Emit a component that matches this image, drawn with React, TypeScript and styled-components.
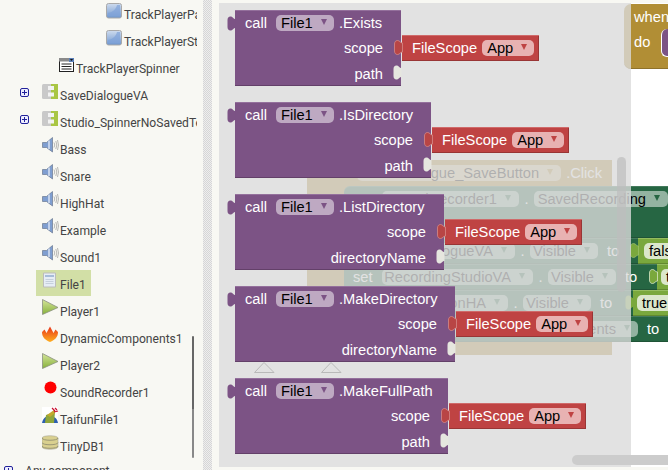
import React from "react";
import styled, { createGlobalStyle } from "styled-components";

const Global = createGlobalStyle`
  html, body { margin: 0; padding: 0; background: #f8f8f3; }
  body { width: 668px; height: 470px; overflow: hidden; }
`;

const Page = styled.div`
  width: 668px; height: 470px; display: flex; overflow: hidden; background: #f8f8f3;
`;

/* ---------- component tree ---------- */
const TreePane = styled.div`
  position: relative; width: 203px; flex: none; height: 470px; overflow: hidden;
`;
const TreeClip = styled.div`
  width: 197px; overflow: hidden;
`;
const TreeRow = styled.div<{ $indent: number }>`
  height: 27px; display: flex; align-items: flex-start; padding-left: ${p => p.$indent}px;
  font: 12.1px Roboto, "Liberation Sans", sans-serif; color: #444; white-space: nowrap;
`;
const Expander = styled.svg<{ $gap: number }>`
  width: 9px; height: 9px; flex: none; margin-top: 7px; margin-right: ${p => p.$gap}px;
`;
const TreeItem = styled.div<{ $selected?: boolean }>`
  display: flex; align-items: flex-start; gap: 1px; height: 26px;
  ${p => p.$selected ? "background: #d2dfa6; margin-left: -6px; padding: 0 5px 0 6px;" : ""}
`;
const TreeIcon = styled.svg`
  width: 17px; height: 17px; flex: none; margin-top: 2px;
`;
const TreeLabel = styled.span<{ $top?: number }>`
  line-height: 14px; margin-top: ${p => p.$top ?? 8}px;
`;
const TreeThumb = styled.div`
  position: absolute; left: 192px; top: 336px; width: 2px; height: 122px;
  background: linear-gradient(#666 0 60%, #888 60%); border-radius: 1px;
`;
const Splitter = styled.div`
  width: 9px; flex: none; height: 470px;
  background: repeating-conic-gradient(#d6d6d6 0 25%, #eeeeee 0 50%) 0 0 / 2px 2px;
`;
const Gutter = styled.div`
  width: 7px; flex: none;
`;

/* ---------- block canvas ---------- */
const Canvas = styled.div`
  position: relative; width: 449px; height: 464px; margin-top: 3px; background: #fff; overflow: hidden;
  font: 14.67px "Liberation Sans", Arial, sans-serif; color: #fff;
`;
const Flyout = styled.div`
  position: absolute; left: 0; top: 0; width: 412px; height: 100%;
  background: rgba(219, 219, 219, 0.8);
`;
const VScroll = styled.div`
  position: absolute; left: 398px; top: 154px; width: 9px; height: 135px;
  border-radius: 5px; background: rgba(190, 190, 190, 0.7);
`;
const HScroll = styled.div`
  position: absolute; left: 353px; top: 452px; width: 110px; height: 10px;
  border-radius: 5px; background: #cccccc;
`;

const HatBlock = styled.div`
  position: absolute; left: 405px; top: 1px; width: 60px; height: 65px; box-sizing: border-box;
  background: #b18e35; border-radius: 7px 0 0 7px; padding-left: 10px;
  display: grid; grid-template-rows: 25px 26px;
  box-shadow: inset 0 -1px 0 #8e722a;
`;
const HatRow = styled.div`
  display: flex; align-items: center; gap: 11px; height: 25px;
`;
const HatSlot = styled.div`
  width: 20px; height: 27px; margin-top: 2px; background: #7c5385; border-radius: 6px 0 0 6px;
  border-left: 1px solid #fff; border-bottom: 1px solid #fff; flex: none;
`;

const EventBlock = styled.div`
  position: absolute; left: 88px; top: 157px; width: 305px; height: 195px;
  background: #b18e35; border-radius: 6px 0 0 6px;
`;
const EventHeader = styled.div`
  height: 26px; display: flex; align-items: center; justify-content: space-between; padding: 0 10px 0 10px;
`;
const EventBody = styled.div`
  margin-left: 37px; display: flex; flex-direction: column;
`;
const RowWrap = styled.div<{ $tall?: boolean }>`
  display: flex; height: ${p => p.$tall ? 52 : 26}px; width: 340px;
`;
const SetRow = styled.div<{ $w: number; $tall?: boolean }>`
  width: ${p => p.$w}px; flex: none; box-sizing: border-box; height: ${p => p.$tall ? 52 : 26}px;
  background: #266643; padding-left: 9px; display: flex; align-items: ${p => p.$tall ? "flex-start" : "center"};
  ${p => p.$tall ? "padding-top: 5px; border-radius: 6px 0 0 0;" : ""}
  box-shadow: inset 0 1px 0 rgba(255,255,255,.14), inset 0 -1px 0 rgba(0,0,0,.18);
`;
const SetWord = styled.span`
  width: 29px; flex: none; line-height: 16px;
`;
const Dot = styled.span`
  width: 15px; flex: none; text-align: center; line-height: 16px;
`;
const ToWord = styled.span`
  margin-left: 9px; line-height: 16px;
`;
const Field = styled.div<{ $w?: number; $bg?: string; $compact?: boolean }>`
  ${p => p.$w ? `width: ${p.$w}px;` : ""} height: 16px; flex: none; box-sizing: border-box;
  display: flex; align-items: center; justify-content: ${p => p.$compact ? "space-between" : "flex-end"};
  gap: 8px; padding: ${p => p.$compact ? "0 9px 0 5px" : "0 8px 0 5px"};
  border-radius: 5px; background: ${p => p.$bg || "rgba(255,255,255,.5)"}; color: #000; white-space: nowrap; line-height: 16px;
`;
const Arrow = styled.span<{ $c: string }>`
  width: 0; height: 0; flex: none; margin-top: -2px;
  border-left: 3px solid transparent; border-right: 3px solid transparent; border-top: 6px solid ${p => p.$c};
`;
const ValueBlock = styled.div`
  position: relative; flex: 1; height: 26px; background: #7aa83d; padding: 5px 0 0 4px; box-sizing: border-box;
  box-shadow: inset 0 1px 0 #95bd5f, inset 0 -1px 0 #62892f;
`;
const ValueField = styled.div<{ $inset?: number }>`
  width: 60px; height: 16px; background: #dbe7cb; border-radius: 5px; color: #000; padding-left: 5px; line-height: 16px;
  margin-left: ${p => p.$inset ?? 0}px;
`;
const Tab = styled.svg<{ $l: number; $t: number }>`
  position: absolute; left: ${p => p.$l}px; top: ${p => p.$t}px; width: 8px; height: 16px; overflow: visible;
`;

/* ---------- flyout blocks ---------- */
const CallStack = styled.div`
  position: absolute; left: 16px; top: 7px; display: flex; flex-direction: column; gap: 16px;
`;
const CallBlock = styled.div<{ $w: number }>`
  position: relative; width: ${p => p.$w}px; height: 76px; box-sizing: border-box; background: #7c5385;
  display: grid; grid-template-rows: 25px 26px 25px;
  box-shadow: inset 0 1px 0 #94709c, inset 0 -1px 0 #634069;
`;
const TopRow = styled.div`
  display: flex; align-items: center; padding-left: 10px; gap: 9px; white-space: nowrap;
`;
const Method = styled.span`
  margin-left: -4px;
`;
const ArgRow = styled.div`
  position: relative; display: flex; align-items: center; justify-content: flex-end; padding-right: 18px;
`;
const Literal = styled.div`
  position: absolute; left: calc(100% + 1px); top: 0; width: 137px; height: 26px; box-sizing: border-box;
  display: flex; align-items: center; gap: 5px; padding-left: 10px; background: #bf4343; color: #fff;
  box-shadow: inset 0 1px 0 #cf6a6a, inset 0 -1px 0 #993535, inset -1px 0 0 #993535;
`;
const Triangles = styled.svg`
  position: absolute; left: 19px; top: 352px; width: 92px; height: 11px;
`;

const tabPath = "M8.500 3 C6 3 6 .5 3.500 .5 C1.500 .5 .5 2 .5 4 V11 C.5 13 1.500 14.500 3.500 14.500 C6 14.500 6 12 8.500 12 Z";

const Plus = ({ gap }: { gap: number }) => (
  <Expander $gap={gap} viewBox="0 0 9 9">
    <rect x=".5" y=".5" width="8" height="8" rx="1.5" fill="#eef" stroke="#22229a" />
    <path d="M2 4.5h5M4.5 2v5" stroke="#22229a" />
  </Expander>
);

const ButtonIcon = () => (
  <TreeIcon viewBox="0 0 17 17">
    <defs><linearGradient id="btn" x1="0" y1="0" x2="0" y2="1"><stop offset="0" stopColor="#cfdcee" /><stop offset="1" stopColor="#6f97cf" /></linearGradient></defs>
    <rect x=".5" y="1.5" width="15" height="14.5" rx="2" fill="url(#btn)" stroke="#a9a9a9" />
    <path d="M2 11 C7 10 10 7 11 3 H14 V14 H2 Z" fill="#7fa3d8" opacity=".7" />
  </TreeIcon>
);
const SpinnerIcon = () => (
  <TreeIcon viewBox="0 0 17 17">
    <rect x="1.5" y="2.5" width="14" height="13" fill="#fff" stroke="#222" />
    <rect x="1" y="2" width="15" height="3.5" fill="#8a8a8a" />
    <rect x="11" y="2" width="5" height="4" fill="#5a7fb8" />
    <path d="M12 3l1.5 2 1.5-2z" fill="#111" />
    <path d="M3.5 8h10M3.5 10.500h10M3.500 13h10" stroke="#222" />
  </TreeIcon>
);
const ArrangementIcon = () => (
  <TreeIcon viewBox="0 0 17 17">
    <rect x="0" y="1" width="16" height="15" rx="1.500" fill="#c9c9c9" />
    <rect x="9" y="1" width="7" height="15" fill="#a9c644" />
    <rect x="6" y="3" width="6" height="4" fill="#f2f2f2" />
    <rect x="6" y="9.500" width="6" height="4" fill="#f2f2f2" />
  </TreeIcon>
);
const SpeakerIcon = () => (
  <TreeIcon viewBox="0 0 17 17">
    <path d="M.5 5.500 H4.500 L10.500 .5 V15 L4.500 10.500 H.5 Z" fill="#7f9ed0" stroke="#6a7890" strokeWidth=".7" />
    <path d="M7 3.500 V12" stroke="#d8e2f3" strokeWidth="1.500" />
    <path d="M12 5.500 Q13.500 8 12 10.500M13.800 4 Q15.800 8 13.800 12M15.500 3 Q17.500 8 15.500 13" fill="none" stroke="#8c8c8c" strokeWidth=".6" />
  </TreeIcon>
);
const FileIcon = () => (
  <TreeIcon viewBox="0 0 17 17">
    <path d="M1.500 1 H13.500 V15 H1.500 Z" fill="#e6edf5" stroke="#bcbcbc" />
    <path d="M3 3H12V5H3z" fill="#a7bcd8" />
    <path d="M3.500 7.500h8M3.500 9.500h8M3.500 11.500h8" stroke="#c6d0dc" />
  </TreeIcon>
);
const PlayerIcon = ({ id }: { id: string }) => (
  <TreeIcon viewBox="0 0 17 17">
    <defs><linearGradient id={id} x1="0" y1="0" x2="0" y2="1"><stop offset="0" stopColor="#d5e59a" /><stop offset="1" stopColor="#86b13a" /></linearGradient></defs>
    <path d="M.5 .5 L16 8.500 L.5 15.500 Z" fill={`url(#${id})`} stroke="#8a8f80" strokeWidth=".8" />
  </TreeIcon>
);
const FlameIcon = () => (
  <TreeIcon viewBox="0 0 17 17">
    <defs><linearGradient id="flame" x1="0" y1="0" x2="0" y2="1"><stop offset="0" stopColor="#e8321a" /><stop offset="1" stopColor="#ffb020" /></linearGradient></defs>
    <path d="M8 16 C3 14 0 11 0 6 L2.500 3.500 L4.500 7 L8 .5 L11.500 7 L13.500 3.500 L16 6 C16 11 13 14 8 16 Z" fill="url(#flame)" />
  </TreeIcon>
);
const RecordIcon = () => (
  <TreeIcon viewBox="0 0 17 17">
    <circle cx="8.500" cy="7.500" r="6" fill="#f00" />
  </TreeIcon>
);
const TaifunIcon = () => (
  <TreeIcon viewBox="0 0 17 17">
    <rect width="16" height="16" fill="#fff" />
    <path d="M0 16 C1 10 5 9 8 9 C12 9 15 11 16 16 Z" fill="#2d5fb0" />
    <path d="M3 16 L4 8 L13 5 L12 16 Z" fill="#8fa63a" />
    <path d="M5 8 L12 3 L13 6 L8 10 Z" fill="#c4a92e" />
    <path d="M10 1 L13 4 M13 1 L15 3 M12 5 L16 4" stroke="#c8102e" strokeWidth="1.200" />
  </TreeIcon>
);
const DbIcon = () => (
  <TreeIcon viewBox="0 0 17 17">
    <path d="M0 4 C0 1 16 1 16 4 V13 C16 16 0 16 0 13 Z" fill="#d9d08f" stroke="#a9a89a" strokeWidth=".6" />
    <path d="M0 4 C0 7 16 7 16 4M0 8.500 C0 11.500 16 11.500 16 8.500M0 12 C0 15 16 15 16 12" fill="none" stroke="#8d8a6f" strokeWidth=".8" />
  </TreeIcon>
);

const CallRow = ({ w, method, arg }: { w: number; method: string; arg: string }) => (
  <CallBlock $w={w}>
    <Tab $l={-8} $t={6} viewBox="0 0 8 16"><path d={tabPath} fill="#7c5385" /></Tab>
    <TopRow>
      call
      <Field $w={58} $bg="#bea9c2" $compact><span>File1</span><Arrow $c="#7c5385" /></Field>
      <Method>{method}</Method>
    </TopRow>
    <ArgRow>
      scope
      <Literal>
        <Tab $l={-8} $t={5} viewBox="0 0 8 16"><path d={tabPath} fill="#b84545" stroke="#d68a88" strokeWidth=".8" /></Tab>
        FileScope
        <Field $w={52} $bg="#e8b2b2" $compact><span>App</span><Arrow $c="#bf4343" /></Field>
      </Literal>
    </ArgRow>
    <ArgRow>
      {arg}
      <Tab $l={w - 8} $t={4} viewBox="0 0 8 16"><path d={tabPath} fill="#e6e6df" /></Tab>
    </ArgRow>
  </CallBlock>
);

export default function App() {
  return (
    <Page>
      <Global />
      <TreePane>
        <TreeClip>
          <TreeRow $indent={106}><TreeItem><ButtonIcon /><TreeLabel>TrackPlayerPause</TreeLabel></TreeItem></TreeRow>
          <TreeRow $indent={106}><TreeItem><ButtonIcon /><TreeLabel>TrackPlayerStop</TreeLabel></TreeItem></TreeRow>
          <TreeRow $indent={58}><TreeItem><SpinnerIcon /><TreeLabel>TrackPlayerSpinner</TreeLabel></TreeItem></TreeRow>
          <TreeRow $indent={20}><Plus gap={13} /><TreeItem><ArrangementIcon /><TreeLabel>SaveDialogueVA</TreeLabel></TreeItem></TreeRow>
          <TreeRow $indent={20}><Plus gap={13} /><TreeItem><ArrangementIcon /><TreeLabel>Studio_SpinnerNoSavedText</TreeLabel></TreeItem></TreeRow>
          <TreeRow $indent={42}><TreeItem><SpeakerIcon /><TreeLabel>Bass</TreeLabel></TreeItem></TreeRow>
          <TreeRow $indent={42}><TreeItem><SpeakerIcon /><TreeLabel>Snare</TreeLabel></TreeItem></TreeRow>
          <TreeRow $indent={42}><TreeItem><SpeakerIcon /><TreeLabel>HighHat</TreeLabel></TreeItem></TreeRow>
          <TreeRow $indent={42}><TreeItem><SpeakerIcon /><TreeLabel>Example</TreeLabel></TreeItem></TreeRow>
          <TreeRow $indent={42}><TreeItem><SpeakerIcon /><TreeLabel>Sound1</TreeLabel></TreeItem></TreeRow>
          <TreeRow $indent={42}><TreeItem $selected><FileIcon /><TreeLabel>File1</TreeLabel></TreeItem></TreeRow>
          <TreeRow $indent={42}><TreeItem><PlayerIcon id="pl1" /><TreeLabel>Player1</TreeLabel></TreeItem></TreeRow>
          <TreeRow $indent={42}><TreeItem><FlameIcon /><TreeLabel>DynamicComponents1</TreeLabel></TreeItem></TreeRow>
          <TreeRow $indent={42}><TreeItem><PlayerIcon id="pl2" /><TreeLabel>Player2</TreeLabel></TreeItem></TreeRow>
          <TreeRow $indent={42}><TreeItem><RecordIcon /><TreeLabel>SoundRecorder1</TreeLabel></TreeItem></TreeRow>
          <TreeRow $indent={42}><TreeItem><TaifunIcon /><TreeLabel>TaifunFile1</TreeLabel></TreeItem></TreeRow>
          <TreeRow $indent={42}><TreeItem><DbIcon /><TreeLabel>TinyDB1</TreeLabel></TreeItem></TreeRow>
          <TreeRow $indent={4}><Plus gap={12} /><TreeItem><TreeLabel $top={5}>Any component</TreeLabel></TreeItem></TreeRow>
        </TreeClip>
        <TreeThumb />
      </TreePane>
      <Splitter />
      <Gutter />
      <Canvas>
        <HatBlock>
          <HatRow>when</HatRow>
          <HatRow>do<HatSlot /></HatRow>
        </HatBlock>
        <EventBlock>
          <EventHeader>
            when
            <Field $w={204}><span>Dialogue_SaveButton</span><Arrow $c="#b18e35" /></Field>
            <span>.Click</span>
          </EventHeader>
          <EventBody>
            <RowWrap $tall>
              <SetRow $w={340} $tall>
                <SetWord>set</SetWord>
                <Field $w={137}><span>SoundRecorder1</span><Arrow $c="#266643" /></Field>
                <Dot>.</Dot>
                <Field $w={134}><span>SavedRecording</span><Arrow $c="#266643" /></Field>
              </SetRow>
            </RowWrap>
            <RowWrap>
              <SetRow $w={294}>
                <SetWord>set</SetWord>
                <Field $w={133}><span>SaveDialogueVA</span><Arrow $c="#266643" /></Field>
                <Dot>.</Dot>
                <Field $w={68}><span>Visible</span><Arrow $c="#266643" /></Field>
                <ToWord>to</ToWord>
              </SetRow>
              <ValueBlock>
                <Tab $l={-8} $t={5} viewBox="0 0 8 16"><path d={tabPath} fill="#7aa83d" stroke="#a5c878" strokeWidth=".6" /></Tab>
                <ValueField $inset={2}>false</ValueField>
              </ValueBlock>
            </RowWrap>
            <RowWrap>
              <SetRow $w={313}>
                <SetWord>set</SetWord>
                <Field $w={151}><span>RecordingStudioVA</span><Arrow $c="#266643" /></Field>
                <Dot>.</Dot>
                <Field $w={68}><span>Visible</span><Arrow $c="#266643" /></Field>
                <ToWord>to</ToWord>
              </SetRow>
              <ValueBlock>
                <Tab $l={-8} $t={5} viewBox="0 0 8 16"><path d={tabPath} fill="#7aa83d" stroke="#d8e6c6" strokeWidth=".8" /></Tab>
                <ValueField>true</ValueField>
              </ValueBlock>
            </RowWrap>
            <RowWrap>
              <SetRow $w={289}>
                <SetWord>set</SetWord>
                <Field $w={126}><span>ButtonHA</span><Arrow $c="#266643" /></Field>
                <Dot>.</Dot>
                <Field $w={68}><span>Visible</span><Arrow $c="#266643" /></Field>
                <ToWord>to</ToWord>
              </SetRow>
              <ValueBlock>
                <Tab $l={-8} $t={5} viewBox="0 0 8 16"><path d={tabPath} fill="#7aa83d" /></Tab>
                <ValueField>true</ValueField>
              </ValueBlock>
            </RowWrap>
            <RowWrap>
              <SetRow $w={340}>
                <SetWord>set</SetWord>
                <Field $w={256}><span>Components</span><Arrow $c="#266643" /></Field>
                <ToWord>to</ToWord>
              </SetRow>
            </RowWrap>
          </EventBody>
        </EventBlock>
        <Flyout />
        <VScroll />
        <HScroll />
        <CallStack>
          <CallRow w={166} method=".Exists" arg="path" />
          <CallRow w={196} method=".IsDirectory" arg="path" />
          <CallRow w={209} method=".ListDirectory" arg="directoryName" />
          <CallRow w={220} method=".MakeDirectory" arg="directoryName" />
          <CallRow w={213} method=".MakeFullPath" arg="path" />
          <Triangles viewBox="0 0 92 11">
            <path d="M.5 10.500 L10 .5 L20 10.500 Z" fill="#e2e2e2" stroke="#b9b9b9" />
            <path d="M67.500 10.500 L77 .5 L87 10.500 Z" fill="#e2e2e2" stroke="#b9b9b9" />
          </Triangles>
        </CallStack>
      </Canvas>
    </Page>
  );
}
